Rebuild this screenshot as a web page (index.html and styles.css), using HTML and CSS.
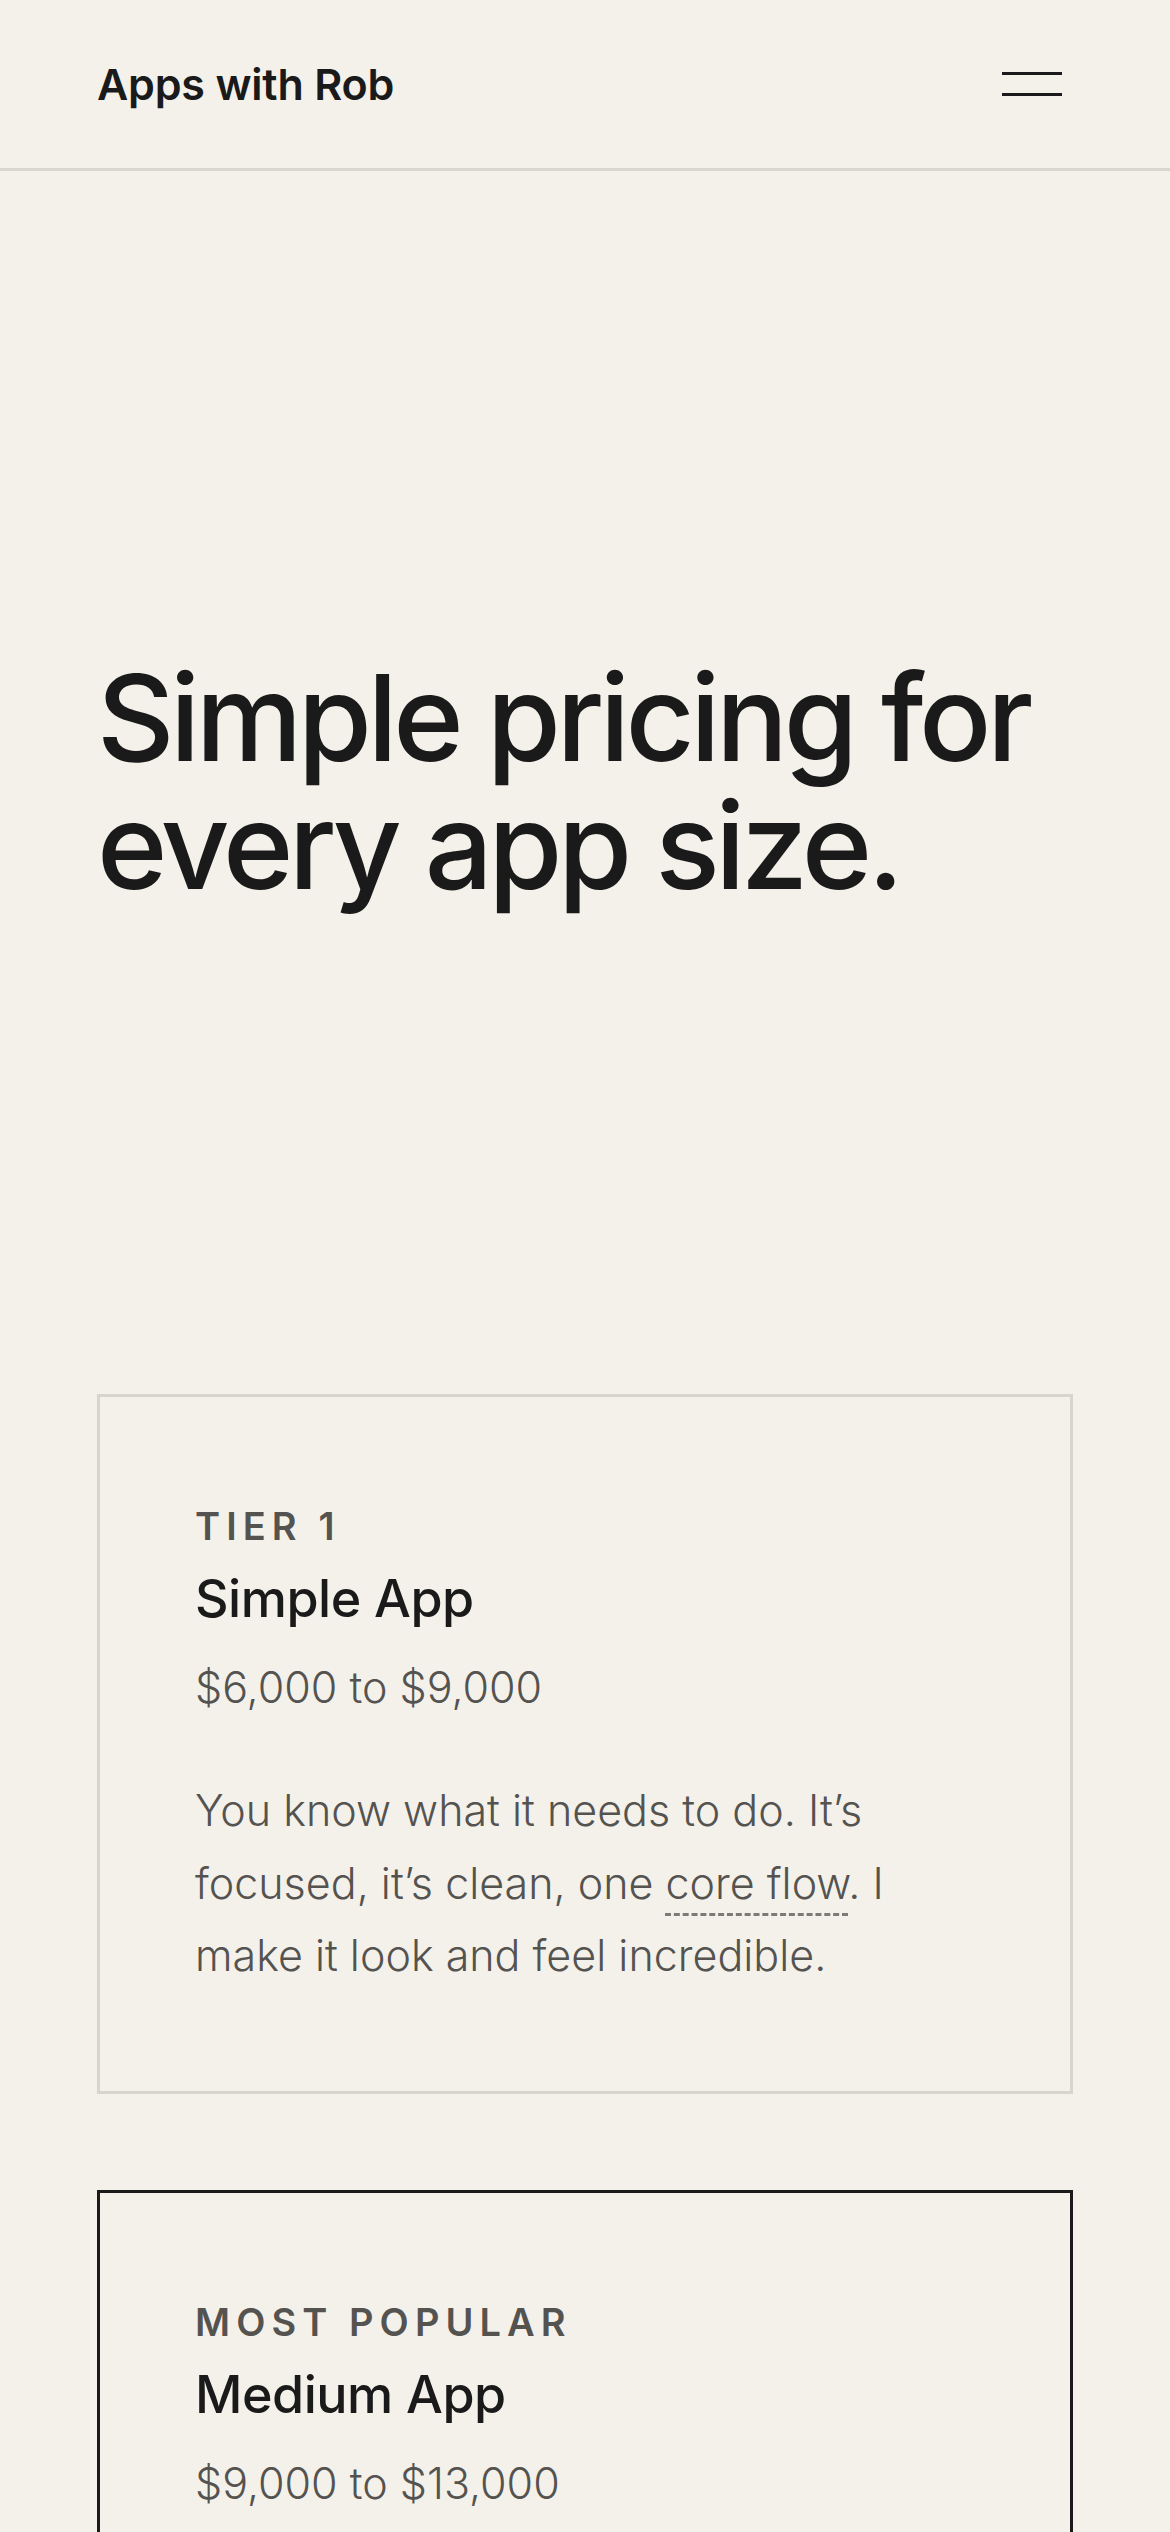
FILE: index.html
```html
<!DOCTYPE html>
<html lang="en">
<head>
<meta charset="utf-8">
<title>Pricing — Apps with Rob</title>
<link rel="stylesheet" href="styles.css">
</head>
<body>
<header class="site-header">
  <a class="logo" href="#">Apps with Rob</a>
  <button class="menu" aria-label="Menu"><span></span><span></span></button>
</header>
<main>
  <section class="hero">
    <h1>Simple pricing for every app size.</h1>
  </section>
  <section class="tiers">
    <article class="card">
      <p class="label">Tier 1</p>
      <h2 class="title">Simple App</h2>
      <p class="price">$6,000 to $9,000</p>
      <p class="desc">You know what it needs to do. It’s focused, it’s clean, one <span class="term">core flow</span>. I make it look and feel incredible.</p>
    </article>
    <article class="card featured">
      <p class="label">Most popular</p>
      <h2 class="title">Medium App</h2>
      <p class="price">$9,000 to $13,000</p>
      <p class="desc">A few connected screens, accounts, and the details that make it feel finished.</p>
    </article>
  </section>
</main>
</body>
</html>
```

FILE: styles.css
```css
* { box-sizing: border-box; }
html, body { margin: 0; padding: 0; }
body {
  background: #f4f1eb;
  color: #1a1a1a;
  font-family: "Inter", "Noto Sans", sans-serif;
}
.site-header {
  height: 171px;
  padding: 0 108px 0 97px;
  display: flex;
  align-items: center;
  justify-content: space-between;
  border-bottom: 3px solid #d9d6d0;
}
.logo {
  font-size: 43px;
  font-weight: 600;
  color: #1a1a1a;
  text-decoration: none;
  letter-spacing: -0.2px;
}
.menu {
  width: 60px;
  height: 24px;
  padding: 0;
  border: 0;
  background: none;
  display: flex;
  flex-direction: column;
  justify-content: space-between;
}
.menu span {
  display: block;
  height: 3px;
  width: 100%;
  background: #1a1a1a;
}
.hero {
  padding: 483px 97px 484px;
}
.hero h1 {
  margin: 0;
  font-size: 120px;
  line-height: 128px;
  font-weight: 500;
  letter-spacing: -4.5px;
}
.tiers {
  padding: 0 97px;
  display: flex;
  flex-direction: column;
  gap: 96px;
}
.card {
  border: 3px solid #d8d5cf;
  padding: 102px 95px 99px;
}
.card.featured {
  border-color: #1a1a1a;
}
.label {
  margin: 0;
  font-size: 38px;
  line-height: 54px;
  font-weight: 600;
  letter-spacing: 0.16em;
  text-transform: uppercase;
  color: #555350;
}
.title {
  margin: 14px 0 0;
  font-size: 52px;
  line-height: 64px;
  font-weight: 500;
  letter-spacing: -0.5px;
}
.price {
  margin: 26px 0 0;
  font-size: 43px;
  line-height: 60px;
  font-weight: 300;
  color: #555350;
}
.desc {
  margin: 57px 0 0;
  max-width: 700px;
  font-size: 43px;
  line-height: 72.6px;
  font-weight: 300;
  color: #555350;
}
.term {
  text-decoration-line: underline;
  text-decoration-style: dashed;
  text-decoration-color: #7d7a75;
  text-decoration-thickness: 3px;
  text-underline-offset: 14px;
}
```
